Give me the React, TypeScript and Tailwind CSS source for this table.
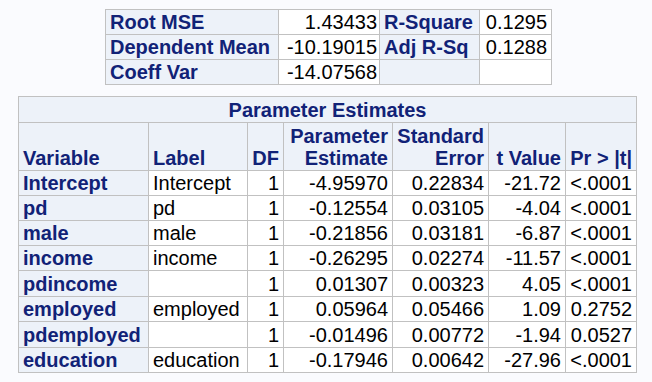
import React from "react";

const B = "border-r border-b border-[#c1c1c1]";
const H = "bg-[#edf2f9] text-[#112277] font-bold";
const D = "bg-white text-black";

type Row = [string, string, string, string, string, string, string];

const rows: Row[] = [
  ["Intercept", "Intercept", "1", "-4.95970", "0.22834", "-21.72", "<.0001"],
  ["pd", "pd", "1", "-0.12554", "0.03105", "-4.04", "<.0001"],
  ["male", "male", "1", "-0.21856", "0.03181", "-6.87", "<.0001"],
  ["income", "income", "1", "-0.26295", "0.02274", "-11.57", "<.0001"],
  ["pdincome", "", "1", "0.01307", "0.00323", "4.05", "<.0001"],
  ["employed", "employed", "1", "0.05964", "0.05466", "1.09", "0.2752"],
  ["pdemployed", "", "1", "-0.01496", "0.00772", "-1.94", "0.0527"],
  ["education", "education", "1", "-0.17946", "0.00642", "-27.96", "<.0001"],
];

const rowHeights = ["h-[25px]", "h-[25px]", "h-[25px]", "h-[25px]", "h-[26px]", "h-[25px]", "h-[26px]", "h-[25px]"];

export default function App() {
  return (
    <div className="min-h-screen w-full bg-[#fafbfe] font-['Liberation_Sans',Arial,sans-serif] text-[20px] leading-[22px] pt-[9px]">
      {/* Fit statistics */}
      <div className="ml-[105px] w-fit grid grid-cols-[173px_101px_100px_72px] border-l border-t border-[#c1c1c1]">
        <div className={`${B} ${H} h-[25px] flex items-center pl-[4px]`}>Root MSE</div>
        <div className={`${B} ${D} h-[25px] flex items-center justify-end pr-[2px]`}>1.43433</div>
        <div className={`${B} ${H} h-[25px] flex items-center pl-[4px]`}>R-Square</div>
        <div className={`${B} ${D} h-[25px] flex items-center justify-end pr-[4px]`}>0.1295</div>

        <div className={`${B} ${H} h-[25px] flex items-center pl-[4px]`}>Dependent Mean</div>
        <div className={`${B} ${D} h-[25px] flex items-center justify-end pr-[2px]`}>-10.19015</div>
        <div className={`${B} ${H} h-[25px] flex items-center pl-[4px]`}>Adj R-Sq</div>
        <div className={`${B} ${D} h-[25px] flex items-center justify-end pr-[4px]`}>0.1288</div>

        <div className={`${B} ${H} h-[25px] flex items-center pl-[4px]`}>Coeff Var</div>
        <div className={`${B} ${D} h-[25px] flex items-center justify-end pr-[2px]`}>-14.07568</div>
        <div className={`${B} ${H} h-[25px]`}></div>
        <div className={`${B} ${D} h-[25px]`}></div>
      </div>

      {/* Parameter estimates */}
      <div className="ml-[18px] mt-[11px] w-fit grid grid-cols-[130px_99px_36px_109px_96px_77px_71px] border-l border-t border-[#c1c1c1]">
        <div className={`${B} ${H} col-span-7 h-[26px] flex items-center justify-center`}>Parameter Estimates</div>

        <div className={`${B} ${H} h-[48px] flex items-end pl-[4px] pb-[1px]`}>Variable</div>
        <div className={`${B} ${H} h-[48px] flex items-end pl-[4px] pb-[1px]`}>Label</div>
        <div className={`${B} ${H} h-[48px] flex items-end justify-end pr-[4px] pb-[1px]`}>DF</div>
        <div className={`${B} ${H} h-[48px] flex flex-col items-end justify-end pr-[4px] pb-[1px]`}>
          <span>Parameter</span>
          <span>Estimate</span>
        </div>
        <div className={`${B} ${H} h-[48px] flex flex-col items-end justify-end pr-[4px] pb-[1px]`}>
          <span>Standard</span>
          <span>Error</span>
        </div>
        <div className={`${B} ${H} h-[48px] flex items-end justify-end pr-[4px] pb-[1px]`}>t Value</div>
        <div className={`${B} ${H} h-[48px] flex items-end justify-end pr-[4px] pb-[1px]`}>Pr &gt; |t|</div>

        {rows.map((r, i) => (
          <React.Fragment key={i}>
            <div className={`${B} ${H} ${rowHeights[i]} flex items-center pl-[4px]`}>{r[0]}</div>
            <div className={`${B} ${D} ${rowHeights[i]} flex items-center pl-[4px]`}>{r[1]}</div>
            <div className={`${B} ${D} ${rowHeights[i]} flex items-center justify-end pr-[4px]`}>{r[2]}</div>
            <div className={`${B} ${D} ${rowHeights[i]} flex items-center justify-end pr-[4px]`}>{r[3]}</div>
            <div className={`${B} ${D} ${rowHeights[i]} flex items-center justify-end pr-[4px]`}>{r[4]}</div>
            <div className={`${B} ${D} ${rowHeights[i]} flex items-center justify-end pr-[4px]`}>{r[5]}</div>
            <div className={`${B} ${D} ${rowHeights[i]} flex items-center justify-end pr-[4px]`}>{r[6]}</div>
          </React.Fragment>
        ))}
      </div>
    </div>
  );
}
